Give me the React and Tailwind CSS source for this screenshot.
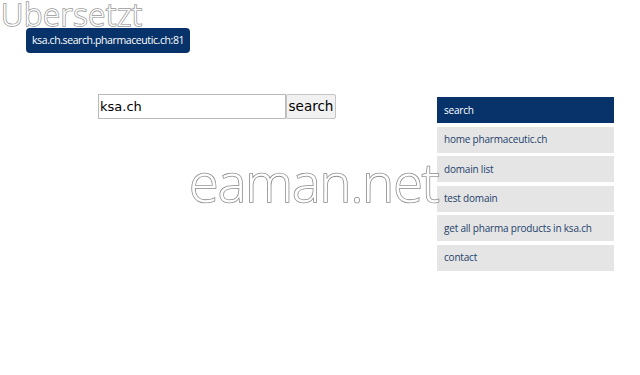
const links = [
  "search",
  "home pharmaceutic.ch",
  "domain list",
  "test domain",
  "get all pharma products in ksa.ch",
  "contact"
];

const App = () => {
  return (
    <div className="relative w-[640px] h-[375px] overflow-hidden bg-white font-['Open_Sans',sans-serif]">
      <h1 className="h-[28px] pl-[1px] text-[31px] leading-[28px] tracking-[0.6px] font-light text-white [-webkit-text-stroke:1.6px_#9a9a9a] [paint-order:stroke_fill]">
        Ubersetzt
      </h1>
      <div className="flex">
        <div className="ml-[26px] flex h-[25px] items-center rounded-[4px] bg-[#08336a] px-[6px] text-[10.5px] tracking-[-0.4px] text-white">
          ksa.ch.search.pharmaceutic.ch:81
        </div>
      </div>

      <div className="mt-[41px] flex">
        <form className="ml-[98px] flex h-[25px]" onSubmit={(e) => e.preventDefault()}>
          <input
            type="text"
            defaultValue="ksa.ch"
            className="h-[25px] w-[188px] border border-[#b9b9b9] px-[1px] text-[13px] text-black font-['DejaVu_Sans',sans-serif] outline-none"
          />
          <button className="h-[25px] w-[50px] rounded-[2px] border border-[#c4c4c4] bg-[#f1f1f1] text-[13.5px] text-black font-['DejaVu_Sans',sans-serif]">
            search
          </button>
        </form>

        <ul className="ml-auto mr-[26px] mt-[3px] flex w-[177px] flex-col gap-[3.5px]">
          {links.map((link, index) => (
            <li
              key={index}
              className={
                index === 0
                  ? "flex h-[26px] items-center bg-[#08336a] pl-[7px] text-[10px] tracking-[-0.2px] text-white"
                  : "flex h-[26px] items-center bg-[#e5e5e5] pl-[7px] text-[10px] tracking-[-0.2px] text-[#243f6b]"
              }
            >
              {link}
            </li>
          ))}
        </ul>
      </div>

      <div className="pointer-events-none absolute left-[189px] top-[154px] text-[54px] leading-none tracking-[-1px] font-light text-white [-webkit-text-stroke:1.6px_#8a8a8a] [paint-order:stroke_fill]">
        eaman.net
      </div>
    </div>
  );
};

export default App;
